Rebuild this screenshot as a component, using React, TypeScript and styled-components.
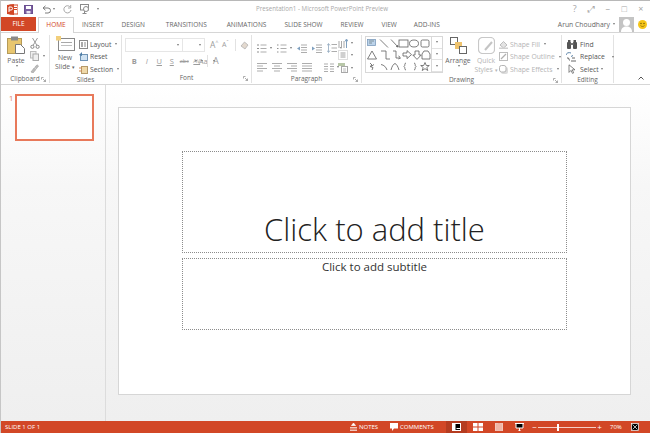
import styled, { createGlobalStyle } from "styled-components";
import type { ReactNode } from "react";

const GlobalStyle = createGlobalStyle`
  html, body { margin: 0; padding: 0; background: #fff; }
  * { box-sizing: border-box; }
`;

const orange = "#d24726";

// ---- small drawings ----

const Svg = ({ w, h, children }: { w: number; h: number; children: ReactNode }) => (
  <svg width={w} height={h} viewBox={`0 0 ${w} ${h}`} fill="none" style={{ display: "block", flex: "none" }}>
    {children}
  </svg>
);

const PptLogo = () => (
  <Svg w={11} h={11}>
    <rect x="3" y="1" width="8" height="9" fill="#fff" stroke="#d24726" />
    <rect x="6" y="3" width="4" height="1" fill="#d24726" />
    <rect x="6" y="5" width="4" height="1" fill="#d24726" />
    <path d="M0 1 7 0v11L0 10z" fill="#d24726" />
    <path d="M2 8V3h2a1.2 1.2 0 0 1 0 3H2" stroke="#fff" />
  </Svg>
);

const SaveIcon = () => (
  <Svg w={9} h={9}>
    <rect x="0.5" y="0.5" width="8" height="8" fill="#7a5fa0" stroke="#6a4f90" />
    <rect x="2" y="1" width="5" height="3" fill="#fff" />
    <rect x="2.5" y="6" width="4" height="2.5" fill="#e8e4f0" />
  </Svg>
);

const UndoIcon = () => (
  <Svg w={9} h={9}>
    <path d="M1 3h5a2.5 2.5 0 0 1 0 5H3M1 3l2.5-2.2M1 3l2.5 2.2" stroke="#7d7d7d" />
  </Svg>
);

const RedoIcon = () => (
  <Svg w={9} h={9}>
    <path d="M7.5 2.4A3.6 3.6 0 1 0 8 5M7.7 0v3H5" stroke="#a8a8a8" />
  </Svg>
);

const ShowIcon = () => (
  <Svg w={10} h={10}>
    <rect x="0.5" y="0.5" width="8" height="5.5" stroke="#8a8a8a" />
    <path d="M4.5 6v3M2.5 9.5h4" stroke="#8a8a8a" />
    <circle cx="6" cy="5" r="2.5" fill="#fff" stroke="#8a8a8a" />
  </Svg>
);

const PasteIcon = () => (
  <Svg w={19} h={18}>
    <rect x="0.5" y="2.5" width="14" height="15" fill="#e8c66f" stroke="#b59a58" />
    <rect x="4" y="0.5" width="7" height="4" fill="#8a8a8a" />
    <path d="M8.5 8.5h5l4 4v5h-9z" fill="#fff" stroke="#777" />
  </Svg>
);

const ScissorsIcon = () => (
  <Svg w={10} h={11}>
    <path d="M2.5 0 7 7.5M7.5 0 3 7.5" stroke="#9a9a9a" />
    <circle cx="2.4" cy="8.8" r="1.6" stroke="#888" />
    <circle cx="7.6" cy="8.8" r="1.6" stroke="#888" />
  </Svg>
);

const CopyIcon = () => (
  <Svg w={9} h={10}>
    <rect x="0.5" y="0.5" width="5.5" height="6.5" fill="#eee" stroke="#bbb" />
    <rect x="3" y="3" width="5.5" height="6.5" fill="#eee" stroke="#aaa" />
  </Svg>
);

const PainterIcon = () => (
  <Svg w={9} h={9}>
    <path d="M1 8 4 4l2 1.5L3 9zM4.5 3.5 7 .8l1.6 1.2L6.2 5" fill="#bbb" stroke="#a0a0a0" strokeWidth=".6" />
  </Svg>
);

const NewSlideIcon = () => (
  <Svg w={19} h={15}>
    <rect x="2.5" y="2.5" width="16" height="12" fill="#fff" stroke="#888" />
    <rect x="5" y="6" width="11" height="1" fill="#a8a8a8" />
    <rect x="5" y="9" width="11" height="1" fill="#c0c0c0" />
    <rect x="0" y="0" width="5" height="4.5" fill="#f2cf7c" />
  </Svg>
);

const LayoutIcon = () => (
  <Svg w={9} h={9}>
    <rect x="0.5" y="0.5" width="8" height="8" fill="#fff" stroke="#8a8a8a" />
    <rect x="2" y="2" width="2" height="5" fill="#a9a9a9" />
    <rect x="5" y="2" width="2" height="5" fill="#c5c5c5" />
  </Svg>
);

const ResetIcon = () => (
  <Svg w={9} h={9}>
    <rect x="1.5" y="2.5" width="7" height="6" fill="#cfe2f2" stroke="#6f93b4" />
    <path d="M0 3 3 0v4z" fill="#4d7ea8" />
  </Svg>
);

const SectionIcon = () => (
  <Svg w={9} h={9}>
    <rect x="2.5" y="1.5" width="6" height="7" fill="#f0d9a8" stroke="#b59a6a" />
    <path d="M0 3h3M0 6h3" stroke="#d08a50" />
  </Svg>
);

const ListIcon = ({ kind }: { kind: "bullets" | "numbers" | "outdent" | "indent" | "spacing" | "left" | "center" | "right" | "justify" | "columns" }) => {
  const c = "#adadad";
  if (kind === "bullets" || kind === "numbers")
    return (
      <Svg w={10} h={9}>
        <path d="M3.5 1h6M3.5 4.5h6M3.5 8h6" stroke={c} />
        <path d="M0 1h2M0 4.5h2M0 8h2" stroke="#8f8f8f" strokeDasharray={kind === "numbers" ? "1 .5" : undefined} />
      </Svg>
    );
  if (kind === "outdent" || kind === "indent")
    return (
      <Svg w={10} h={9}>
        <path d="M4 1h6M4 3.5h6M4 6h6M4 8.5h6" stroke={c} />
        <path d={kind === "indent" ? "M3 4.5 0 2.5v4z" : "M0 4.5 3 2.5v4z"} fill="#7fa0bf" />
      </Svg>
    );
  if (kind === "spacing")
    return (
      <Svg w={10} h={10}>
        <path d="M1.5 1v8M0 2.5l1.5-2 1.5 2M0 7.5l1.5 2 1.5-2" stroke="#8fa6bc" strokeWidth=".8" />
        <path d="M4.5 1.5H10M4.5 5H10M4.5 8.5H10" stroke={c} />
      </Svg>
    );
  if (kind === "columns")
    return (
      <Svg w={10} h={9}>
        <path d="M0 1h4M0 3.5h4M0 6h4M0 8.5h4M6 1h4M6 3.5h4M6 6h4M6 8.5h4" stroke={c} />
      </Svg>
    );
  const rows = { left: [10, 6, 10, 6], center: [10, 6, 10, 6], right: [10, 6, 10, 6], justify: [10, 10, 10, 10] }[kind];
  return (
    <Svg w={10} h={9}>
      {rows.map((n, i) => {
        const x = kind === "center" ? (10 - n) / 2 : kind === "right" ? 10 - n : 0;
        return <rect key={i} x={x} y={i * 2.5} width={n} height="1" fill={c} />;
      })}
    </Svg>
  );
};

const TextDirIcon = () => (
  <Svg w={10} h={11}>
    <path d="M1 3v7M3.5 3v7M6 3v7" stroke="#a9a9a9" />
    <path d="M8.5 10V2M7 3.5 8.5 1 10 3.5" stroke="#7fa0bf" />
  </Svg>
);

const AlignTextIcon = () => (
  <Svg w={10} h={10}>
    <rect x="0.5" y="0.5" width="9" height="9" stroke="#bcbcbc" strokeDasharray="1 1" />
    <path d="M2.5 3h5M2.5 5h5M2.5 7h5" stroke="#a0a0a0" />
  </Svg>
);

const SmartArtIcon = () => (
  <Svg w={10} h={11}>
    <path d="M0 1h7v3H0z" fill="#b8c7a8" />
    <rect x="3.5" y="4.5" width="6" height="6" fill="#fff" stroke="#a8a8a8" />
    <path d="M5 7h3M5 9h3" stroke="#bdbdbd" />
  </Svg>
);

const ShapesGallery = () => (
  <svg width="65" height="33" viewBox="0 0 65 33" fill="none" stroke="#5d5d5d" strokeWidth=".8" style={{ display: "block" }}>
    <rect x="1.5" y="1.5" width="8" height="6" fill="#bcd3ea" stroke="#7d9cbc" />
    <path d="M3 3h5M3 5h3" stroke="#566" strokeWidth=".6" />
    <path d="M14 1.5 22 9.5M25 1.5l7 7.5M32 9l-2-.6M32 9l-.6-2" />
    <rect x="33" y="2" width="9" height="7" />
    <ellipse cx="48" cy="5.5" rx="4.5" ry="3.5" />
    <rect x="55" y="2" width="8" height="7" rx="1.5" />
    <path d="M1.5 21 6 13l4.5 8zM15 13h5v8h4M27 13h3v7h5M34 19l-1.6-1M34 20l-1.6 1" />
    <path d="M37 15h4v-2.4l4.5 4-4.5 4V18h-4zM49 13h4v4h2.2L51 21.4 46.8 17H49zM58 13h4l2 3v5h-8v-5z" />
    <path d="M4 25l2 2-2 1.5 3 1-1 2.5M8 26.5l-3 2M15 26.5c3 .5 5 2.500 6 5.500M25 32c1-4 2.500-6 4-6.500 1.500.5 3 3 4 6.500" />
    <path d="M40 25c-2 0-.5 3-2 3.500 1.500.5 0 3.500 2 3.500M48 25c2 0 .5 3 2 3.500-1.500.5 0 3.500-2 3.500" />
    <path d="M59 24.500l1.300 3h3l-2.500 2 1 3-2.800-1.800-2.800 1.800 1-3-2.500-2h3z" />
  </svg>
);

const ArrangeIcon = () => (
  <Svg w={17} h={17}>
    <rect x="0.5" y="0.5" width="7" height="7" fill="#fff" stroke="#666" />
    <rect x="5" y="5" width="7" height="7" fill="#efc36d" />
    <rect x="9.500" y="9.500" width="7" height="7" fill="#fff" stroke="#666" />
  </Svg>
);

const QuickStylesIcon = () => (
  <Svg w={17} h={17}>
    <rect x="0.5" y="0.5" width="16" height="16" rx="4" fill="#fff" stroke="#c8c8c8" strokeWidth="1.200" />
    <path d="M7 13 14 5" stroke="#c4c4c4" strokeWidth="2" />
  </Svg>
);

const ShapeFillIcon = () => (
  <Svg w={9} h={9}>
    <path d="M1 5 4.500 1.500 8 5 4.500 8z" fill="#e4e4e4" stroke="#bdbdbd" />
    <rect x="0" y="7.500" width="9" height="1.500" fill="#d0d0d0" />
  </Svg>
);

const ShapeOutlineIcon = () => (
  <Svg w={9} h={9}>
    <rect x="0.5" y="0.5" width="8" height="8" stroke="#bdbdbd" />
    <path d="M2 7 7 2" stroke="#b0b0b0" strokeWidth="1.200" />
  </Svg>
);

const ShapeEffectsIcon = () => (
  <Svg w={9} h={9}>
    <rect x="2" y="2" width="7" height="7" rx="2" fill="#dcdcdc" />
    <rect x="0.5" y="0.5" width="6.500" height="6.500" rx="2" fill="#fff" stroke="#b5b5b5" />
  </Svg>
);

const FindIcon = () => (
  <Svg w={10} h={9}>
    <rect x="0" y="2" width="4" height="7" rx="1" fill="#555" />
    <rect x="6" y="2" width="4" height="7" rx="1" fill="#555" />
    <rect x="1" y="0" width="2.500" height="3" fill="#555" />
    <rect x="6.500" y="0" width="2.500" height="3" fill="#555" />
    <rect x="3.500" y="3" width="3" height="2" fill="#777" />
  </Svg>
);

const ReplaceIcon = () => (
  <Svg w={11} h={10}>
    <path d="M0 3c.5-2 2.500-3 5-2" stroke="#5b83a8" />
    <path d="M1 6h1.500l1 2.500M5 9h5M6 6h3" stroke="#666" />
    <path d="M5 4.500 7 3.500" stroke="#5b83a8" />
  </Svg>
);

const SelectIcon = () => (
  <Svg w={8} h={10}>
    <path d="M1 .8v7.600l2-2 1.500 3 1.200-.6-1.500-3H7z" fill="#fff" stroke="#666" strokeWidth=".8" />
  </Svg>
);

const Launcher = () => (
  <Svg w={5} h={5}>
    <path d="M.5 2.500V.5h2M4.500 4.500 2 2M4.500 2.500v2h-2" stroke="#8a8a8a" strokeWidth=".7" />
  </Svg>
);

// ---- ribbon content ----

const paragraphRow1 = ["bullets", "numbers", "outdent", "indent", "spacing"] as const;
const paragraphRow2 = ["left", "center", "right", "justify"] as const;

const shapeTools = [
  { name: "Shape Fill", icon: <ShapeFillIcon /> },
  { name: "Shape Outline", icon: <ShapeOutlineIcon /> },
  { name: "Shape Effects", icon: <ShapeEffectsIcon /> },
];

const editingTools = [
  { name: "Find", icon: <FindIcon />, caret: false },
  { name: "Replace", icon: <ReplaceIcon />, caret: true },
  { name: "Select", icon: <SelectIcon />, caret: true },
];

const slideTools = [
  { name: "Layout", icon: <LayoutIcon />, caret: true },
  { name: "Reset", icon: <ResetIcon />, caret: false },
  { name: "Section", icon: <SectionIcon />, caret: true },
];

const tabs = [
  { name: "INSERT", gap: 8 },
  { name: "DESIGN", gap: 18 },
  { name: "TRANSITIONS", gap: 21 },
  { name: "ANIMATIONS", gap: 20 },
  { name: "SLIDE SHOW", gap: 18 },
  { name: "REVIEW", gap: 18 },
  { name: "VIEW", gap: 18 },
  { name: "ADD-INS", gap: 17 },
];

export default function App() {
  return (
    <>
      <GlobalStyle />
      <Window>
        <TitleBar>
          <QuickAccess>
            <PptLogo />
            <QatSlot $left={6}><SaveIcon /></QatSlot>
            <QatSlot $left={9}><UndoIcon /></QatSlot>
            <Caret $left={2} />
            <QatSlot $left={8}><RedoIcon /></QatSlot>
            <QatSlot $left={8}><ShowIcon /></QatSlot>
            <Caret $left={7} />
          </QuickAccess>
          <WindowTitle>Presentation1 - Microsoft PowerPoint Preview</WindowTitle>
          <WindowButtons>
            <WindowButton>?</WindowButton>
            <WindowButton>⤢</WindowButton>
            <WindowButton>–</WindowButton>
            <WindowButton>□</WindowButton>
            <WindowButton>×</WindowButton>
          </WindowButtons>
        </TitleBar>

        <TabBar>
          <FileTab>FILE</FileTab>
          <HomeTab>HOME</HomeTab>
          {tabs.map((t) => (
            <Tab key={t.name} $gap={t.gap}>{t.name}</Tab>
          ))}
          <Account>
            <span>Arun Choudhary</span>
            <Caret $left={3} />
            <Avatar>
              <svg width="15" height="15" viewBox="0 0 15 15" style={{ display: "block" }}>
                <rect width="15" height="15" fill="#c4c4c4" />
                <circle cx="7.500" cy="5.500" r="3.500" fill="#fff" />
                <path d="M2 15c0-4 2.500-5.500 5.500-5.500S13 11 13 15z" fill="#fff" />
              </svg>
            </Avatar>
            <Smile>
              <svg width="9" height="9" viewBox="0 0 9 9" style={{ display: "block" }}>
                <circle cx="4.500" cy="4.500" r="4.500" fill="#f5c518" />
                <circle cx="3" cy="3.500" r=".7" fill="#6b5200" />
                <circle cx="6" cy="3.500" r=".7" fill="#6b5200" />
                <path d="M2.500 5.500c.8 1.300 3.200 1.300 4 0" stroke="#6b5200" strokeWidth=".6" fill="none" />
              </svg>
            </Smile>
          </Account>
        </TabBar>

        <Ribbon>
          <Group $width={49}>
            <GroupBody>
              <BigButton $width={22}>
                <PasteIcon />
                <BigLabel>Paste</BigLabel>
                <Caret />
              </BigButton>
              <IconStack>
                <ScissorsIcon />
                <Row><CopyIcon /><Caret $left={4} /></Row>
                <PainterIcon />
              </IconStack>
            </GroupBody>
            <GroupFooter>
              <GroupName>Clipboard</GroupName>
              <LauncherSlot><Launcher /></LauncherSlot>
            </GroupFooter>
          </Group>

          <Group $width={72}>
            <GroupBody>
              <BigButton $width={22}>
                <NewSlideIcon />
                <BigLabel>New<br />Slide <InlineCaret>▾</InlineCaret></BigLabel>
              </BigButton>
              <ToolStack>
                {slideTools.map((t) => (
                  <ToolRow key={t.name}>
                    {t.icon}
                    <span>{t.name}</span>
                    {t.caret && <Caret />}
                  </ToolRow>
                ))}
              </ToolStack>
            </GroupBody>
            <GroupFooter><GroupName>Slides</GroupName></GroupFooter>
          </Group>

          <Group $width={130}>
            <FontRows>
              <Row>
                <Combo $width={58}><Caret /></Combo>
                <Combo $width={23}><Caret /></Combo>
                <GrowFont $left={6}>A<sup>^</sup></GrowFont>
                <GrowFont $left={3} $small>A<sup>ˇ</sup></GrowFont>
                <FontDivider />
                <svg width="9" height="9" viewBox="0 0 9 9" style={{ display: "block", marginLeft: 2 }}>
                  <path d="M1 5 4.500 1 8 4 5 8z" fill="#e3d9cf" stroke="#aaa" strokeWidth=".7" />
                </svg>
              </Row>
              <FormatRow>
                <FormatGlyph $weight={700}>B</FormatGlyph>
                <FormatGlyph $italic>I</FormatGlyph>
                <FormatGlyph $underline>U</FormatGlyph>
                <FormatGlyph $underline>S</FormatGlyph>
                <FormatGlyph $strike $small>abc</FormatGlyph>
                <FormatGlyph $underline $small>AV</FormatGlyph>
                <Caret $left={-8} />
                <FormatGlyph>Aa</FormatGlyph>
                <Caret $left={-9} />
                <FontDivider />
                <FormatGlyph $large>A</FormatGlyph>
                <Caret $left={-9} />
              </FormatRow>
            </FontRows>
            <GroupFooter>
              <GroupName>Font</GroupName>
              <LauncherSlot><Launcher /></LauncherSlot>
            </GroupFooter>
          </Group>

          <Group $width={110}>
            <ParagraphBody>
              <ParagraphRows>
                <ParaRow>
                  {paragraphRow1.map((k, i) => (
                    <Row key={k}>
                      <ListIcon kind={k} />
                      {(i < 2 || i === 4) && <Caret $left={3} />}
                    </Row>
                  ))}
                </ParaRow>
                <ParaRow>
                  {paragraphRow2.map((k) => (
                    <ListIcon key={k} kind={k} />
                  ))}
                  <ParaDivider />
                  <Row><ListIcon kind="columns" /><Caret $left={3} /></Row>
                </ParaRow>
              </ParagraphRows>
              <IconStack>
                <Row><TextDirIcon /><Caret $left={3} /></Row>
                <Row><AlignTextIcon /><Caret $left={3} /></Row>
                <Row><SmartArtIcon /><Caret $left={3} /></Row>
              </IconStack>
            </ParagraphBody>
            <GroupFooter>
              <GroupName>Paragraph</GroupName>
              <LauncherSlot><Launcher /></LauncherSlot>
            </GroupFooter>
          </Group>

          <Group $width={200}>
            <DrawingBody>
              <Gallery>
                <ShapesGallery />
                <GalleryScroll>
                  <GalleryStep><Caret /></GalleryStep>
                  <GalleryStep><Caret /></GalleryStep>
                  <GalleryStep><Caret /></GalleryStep>
                </GalleryScroll>
              </Gallery>
              <DrawButton $width={28}>
                <ArrangeIcon />
                <BigLabel>Arrange</BigLabel>
                <Caret />
              </DrawButton>
              <DrawButton $width={26} $muted>
                <QuickStylesIcon />
                <BigLabel>Quick<br />Styles <InlineCaret>▾</InlineCaret></BigLabel>
              </DrawButton>
              <ToolStack $muted>
                {shapeTools.map((t) => (
                  <ToolRow key={t.name}>
                    {t.icon}
                    <span>{t.name}</span>
                    <Caret />
                  </ToolRow>
                ))}
              </ToolStack>
            </DrawingBody>
            <GroupFooter>
              <GroupName>Drawing</GroupName>
              <LauncherSlot><Launcher /></LauncherSlot>
            </GroupFooter>
          </Group>

          <Group $width={52} $last>
            <EditingBody>
              <ToolStack>
                {editingTools.map((t) => (
                  <ToolRow key={t.name}>
                    <EditIcon>{t.icon}</EditIcon>
                    <span>{t.name}</span>
                    {t.caret && <Caret $left={t.name === "Replace" ? 5 : 0} />}
                  </ToolRow>
                ))}
              </ToolStack>
            </EditingBody>
            <GroupFooter><GroupName>Editing</GroupName></GroupFooter>
          </Group>

          <Collapse>
            <svg width="6" height="4" viewBox="0 0 6 4" style={{ display: "block" }}>
              <path d="M.5 3.500 3 1l2.500 2.500" stroke="#555" fill="none" />
            </svg>
          </Collapse>
        </Ribbon>

        <Workspace>
          <ThumbPane>
            <ThumbNumber>1</ThumbNumber>
            <Thumb />
          </ThumbPane>
          <Editor>
            <Slide>
              <TitleHolder>Click to add title</TitleHolder>
              <SubtitleHolder>Click to add subtitle</SubtitleHolder>
            </Slide>
          </Editor>
        </Workspace>

        <StatusBar>
          <SlideCount>SLIDE 1 OF 1</SlideCount>
          <StatusItem $width={40}>
            <svg width="7" height="8" viewBox="0 0 7 8" style={{ display: "block" }}>
              <path d="M0 4.500h7M0 6h7M0 7.500h7M3.500 0 1.500 2.500h4z" stroke="#fff" strokeWidth=".7" fill="#fff" />
            </svg>
            NOTES
          </StatusItem>
          <StatusItem $width={56}>
            <svg width="8" height="8" viewBox="0 0 8 8" style={{ display: "block" }}>
              <path d="M0 0h8v5.500H4L2 8V5.500H0z" fill="#fff" />
            </svg>
            COMMENTS
          </StatusItem>
          <ViewButton $active>
            <svg width="9" height="8" viewBox="0 0 9 8" style={{ display: "block" }}>
              <rect x=".5" y=".5" width="8" height="7" stroke="#fff" />
              <rect x="1" y="1" width="2.500" height="6" fill="#fff" />
              <rect x="4.500" y="5" width="3.500" height="1" fill="#fff" />
            </svg>
          </ViewButton>
          <ViewButton>
            <svg width="10" height="8" viewBox="0 0 10 8" style={{ display: "block" }}>
              <path d="M0 0h4.500v3.500H0zM5.500 0H10v3.500H5.500zM0 4.500h4.500V8H0zM5.500 4.500H10V8H5.500z" fill="#fff" />
            </svg>
          </ViewButton>
          <ViewButton>
            <svg width="8" height="8" viewBox="0 0 8 8" style={{ display: "block" }}>
              <path d="M0 .5h3.500l.5.500.5-.5H8v7H4.500L4 8l-.5-.5H0z" fill="#f0b5a5" stroke="#fff" strokeWidth=".5" />
            </svg>
          </ViewButton>
          <ViewButton>
            <svg width="9" height="8" viewBox="0 0 9 8" style={{ display: "block" }}>
              <path d="M0 .5h9M1 .5V5h7V.5M4.500 5v3M3 8h3" stroke="#fff" />
            </svg>
          </ViewButton>
          <Zoom>
            <ZoomSign>−</ZoomSign>
            <ZoomTrack><ZoomThumb /></ZoomTrack>
            <ZoomSign>+</ZoomSign>
          </Zoom>
          <ZoomValue>70%</ZoomValue>
          <FitButton>
            <svg width="8" height="8" viewBox="0 0 8 8" style={{ display: "block" }}>
              <rect x=".5" y=".5" width="7" height="7" stroke="#fff" strokeWidth=".7" />
              <path d="M1.500 1.500l5 5M6.500 1.500l-5 5" stroke="#fff" strokeWidth=".7" />
            </svg>
          </FitButton>
        </StatusBar>
      </Window>
    </>
  );
}

// ---- styles ----

const Window = styled.div`
  width: 650px;
  height: 433px;
  display: flex;
  flex-direction: column;
  overflow: hidden;
  background: #fff;
  border-left: 1px solid #c6c6c6;
  border-top: 1px solid #b8b8b8;
  font-family: "Open Sans", "Liberation Sans", sans-serif;
  color: #555;
`;

const TitleBar = styled.div`
  height: 16px;
  flex: none;
  display: flex;
  align-items: center;
  position: relative;
  padding-left: 6px;
`;

const QuickAccess = styled.div`
  display: flex;
  align-items: center;
`;

const QatSlot = styled.div<{ $left: number }>`
  margin-left: ${(p) => p.$left}px;
`;

const Caret = styled.span<{ $left?: number }>`
  display: inline-block;
  flex: none;
  width: 0;
  height: 0;
  margin-left: ${(p) => p.$left ?? 2}px;
  border-left: 1.500px solid transparent;
  border-right: 1.500px solid transparent;
  border-top: 2px solid #777;
`;

const WindowTitle = styled.div`
  position: absolute;
  left: 255px;
  top: 3px;
  font-size: 6.200px;
  line-height: 10px;
  color: #a9a9a9;
  white-space: nowrap;
`;

const WindowButtons = styled.div`
  margin-left: auto;
  display: flex;
  padding-right: 1px;
`;

const WindowButton = styled.div`
  width: 16.500px;
  text-align: center;
  font-size: 9px;
  line-height: 12px;
  color: #a6a6a6;
`;

const TabBar = styled.div`
  height: 15px;
  flex: none;
  display: flex;
  align-items: center;
  position: relative;
  z-index: 1;
`;

const FileTab = styled.div`
  width: 35px;
  height: 14px;
  align-self: flex-start;
  background: ${orange};
  color: #fff;
  font-size: 6.500px;
  line-height: 14px;
  text-align: center;
`;

const HomeTab = styled.div`
  width: 36px;
  height: 16px;
  align-self: flex-start;
  margin-left: 2px;
  background: #fff;
  border: 1px solid #d4d4d4;
  border-bottom: none;
  color: ${orange};
  font-size: 6.500px;
  line-height: 13px;
  text-align: center;
`;

const Tab = styled.div<{ $gap: number }>`
  margin-left: ${(p) => p.$gap}px;
  font-size: 6.500px;
  line-height: 14px;
  color: #666;
  white-space: nowrap;
`;

const Account = styled.div`
  margin-left: auto;
  display: flex;
  align-items: center;
  font-size: 6.800px;
  color: #666;
  align-self: flex-start;
  height: 14px;
  white-space: nowrap;
`;

const Avatar = styled.div`
  margin-left: 4px;
`;

const Smile = styled.div`
  margin-left: 4px;
  margin-right: 3px;
`;

const Ribbon = styled.div`
  height: 53px;
  flex: none;
  display: flex;
  border-bottom: 1px solid #d6d6d6;
  border-top: 1px solid #d6d6d6;
  position: relative;
`;

const Group = styled.div<{ $width: number; $last?: boolean }>`
  width: ${(p) => p.$width}px;
  flex: none;
  display: flex;
  flex-direction: column;
  margin-top: 2px;
  margin-bottom: 1px;
  border-right: 1px solid #e2e2e2;
`;

const GroupBody = styled.div`
  flex: 1;
  display: flex;
  padding: 1px 0 0 4px;
  gap: 3px;
`;

const GroupFooter = styled.div`
  height: 10px;
  flex: none;
  position: relative;
  text-align: center;
`;

const GroupName = styled.div`
  font-size: 6.500px;
  line-height: 10px;
  color: #666;
`;

const LauncherSlot = styled.div`
  position: absolute;
  right: 3px;
  top: 3px;
`;

const BigButton = styled.div<{ $width: number }>`
  width: ${(p) => p.$width}px;
  flex: none;
  display: flex;
  flex-direction: column;
  align-items: center;
`;

const BigLabel = styled.div`
  font-size: 6.800px;
  line-height: 9px;
  margin-top: 2px;
  text-align: center;
  white-space: nowrap;
  color: #666;
`;

const InlineCaret = styled.span`
  font-size: 5px;
`;

const IconStack = styled.div`
  display: flex;
  flex-direction: column;
  justify-content: space-around;
  padding-top: 1px;
  height: 38px;
`;

const Row = styled.div`
  display: flex;
  align-items: center;
`;

const ToolStack = styled.div<{ $muted?: boolean }>`
  display: flex;
  flex-direction: column;
  height: 39px;
  padding-top: 2px;
  justify-content: space-between;
  color: ${(p) => (p.$muted ? "#b4b4b4" : "#555")};
`;

const ToolRow = styled.div`
  display: flex;
  align-items: center;
  gap: 2px;
  height: 12px;
  font-size: 6.800px;
  white-space: nowrap;
`;

const FontRows = styled.div`
  flex: 1;
  display: flex;
  flex-direction: column;
  padding: 3px 0 0 3px;
`;

const Combo = styled.div<{ $width: number }>`
  width: ${(p) => p.$width}px;
  height: 14px;
  flex: none;
  margin-right: -1px;
  border: 1px solid #e6e6e6;
  display: flex;
  align-items: center;
  justify-content: flex-end;
  padding-right: 3px;
`;

const GrowFont = styled.div<{ $left: number; $small?: boolean }>`
  margin-left: ${(p) => p.$left}px;
  font-size: ${(p) => (p.$small ? 7 : 8.500)}px;
  line-height: 12px;
  color: #9c9c9c;
  width: 9px;

  sup {
    font-size: 5px;
    line-height: 0;
  }
`;

const FontDivider = styled.div`
  width: 1px;
  height: 12px;
  margin: 0 2px 0 4px;
  background: #e2e2e2;
`;

const FormatRow = styled.div`
  display: flex;
  align-items: center;
  margin-top: 3px;
  padding-left: 3px;
`;

const FormatGlyph = styled.div<{ $weight?: number; $italic?: boolean; $underline?: boolean; $strike?: boolean; $small?: boolean; $large?: boolean }>`
  min-width: 12.500px;
  text-align: center;
  font-size: ${(p) => (p.$small ? 5.500 : p.$large ? 9 : 7.500)}px;
  line-height: 12px;
  color: #9c9c9c;
  font-weight: ${(p) => p.$weight ?? 400};
  font-style: ${(p) => (p.$italic ? "italic" : "normal")};
  text-decoration: ${(p) => (p.$underline ? "underline" : p.$strike ? "line-through" : "none")};
`;

const ParagraphBody = styled.div`
  flex: 1;
  display: flex;
  padding: 1px 0 0 5px;
`;

const ParagraphRows = styled.div`
  width: 81px;
  display: flex;
  flex-direction: column;
  padding-top: 7px;
  gap: 9px;
`;

const ParaRow = styled.div`
  display: flex;
  align-items: center;
  gap: 5px;
  height: 10px;
`;

const ParaDivider = styled.div`
  width: 1px;
  height: 12px;
  background: #e4e4e4;
  margin: 0 1px;
`;

const DrawingBody = styled.div`
  flex: 1;
  display: flex;
  padding: 1px 0 0 3px;
`;

const Gallery = styled.div`
  display: flex;
  height: 37px;
  flex: none;
  border: 1px solid #d8d8d8;
  width: 78px;
  padding-top: 1px;
`;

const GalleryScroll = styled.div`
  margin-left: auto;
  width: 11px;
  display: flex;
  flex-direction: column;
  border-left: 1px solid #d8d8d8;
  margin-top: -1px;
`;

const GalleryStep = styled.div`
  flex: 1;
  display: flex;
  align-items: center;
  justify-content: center;
  border-bottom: 1px solid #e2e2e2;

  ${Caret} {
    margin-left: 0;
  }
`;

const DrawButton = styled.div<{ $width: number; $muted?: boolean }>`
  width: ${(p) => p.$width}px;
  flex: none;
  display: flex;
  flex-direction: column;
  align-items: center;
  padding-top: 1px;
  margin-left: 1px;

  ${BigLabel} {
    color: ${(p) => (p.$muted ? "#b4b4b4" : "#666")};
  }
`;

const EditingBody = styled.div`
  flex: 1;
  padding: 1px 0 0 4px;
`;

const EditIcon = styled.div`
  width: 11px;
  margin-right: 1px;
  display: flex;
  justify-content: center;
`;

const Collapse = styled.div`
  position: absolute;
  right: 6px;
  bottom: 4px;
`;

const Workspace = styled.div`
  flex: 1;
  min-height: 0;
  display: flex;
  background: linear-gradient(#ffffff 0, #f7f7f7 30%, #efefef 100%);
`;

const ThumbPane = styled.div`
  width: 105px;
  flex: none;
  display: flex;
  align-items: flex-start;
  padding: 9px 0 0 8px;
  gap: 3px;
  border-right: 1px solid #dcdcdc;
`;

const ThumbNumber = styled.div`
  font-size: 7.500px;
  line-height: 9px;
  color: #e07a5f;
  width: 3px;
`;

const Thumb = styled.div`
  width: 79px;
  height: 47px;
  background: #fff;
  border: 2px solid #e8795a;
`;

const Editor = styled.div`
  flex: 1;
  padding: 22px 19px 26px 12px;
  display: flex;
`;

const Slide = styled.div`
  flex: 1;
  background: #fff;
  border: 1px solid #d6d6d6;
  padding: 43px 63px 0;
  display: flex;
  flex-direction: column;
  gap: 5px;
`;

const TitleHolder = styled.div`
  height: 102px;
  border: 1px dotted #8c8c8c;
  display: flex;
  align-items: flex-end;
  justify-content: center;
  padding-bottom: 3px;
  font-size: 31px;
  font-weight: 300;
  line-height: 40px;
  color: #222;
`;

const SubtitleHolder = styled.div`
  height: 72px;
  border: 1px dotted #8c8c8c;
  text-align: center;
  font-size: 11.500px;
  line-height: 16px;
  color: #333;
`;

const StatusBar = styled.div`
  height: 12px;
  flex: none;
  margin-left: -1px;
  background: ${orange};
  display: flex;
  align-items: center;
  color: #fff;
  font-size: 6px;
  white-space: nowrap;
`;

const SlideCount = styled.div`
  margin-left: 5px;
  width: 345px;
`;

const StatusItem = styled.div<{ $width: number }>`
  width: ${(p) => p.$width}px;
  display: flex;
  align-items: center;
  gap: 2px;
`;

const ViewButton = styled.div<{ $active?: boolean }>`
  width: 21px;
  height: 12px;
  display: flex;
  align-items: center;
  justify-content: center;
  background: ${(p) => (p.$active ? "#b53c20" : "transparent")};
`;

const Zoom = styled.div`
  display: flex;
  align-items: center;
  margin-left: 1px;
`;

const ZoomSign = styled.div`
  width: 7px;
  text-align: center;
  font-size: 8px;
  line-height: 12px;
`;

const ZoomTrack = styled.div`
  width: 58px;
  height: 1px;
  background: #f6cfc5;
  position: relative;
`;

const ZoomThumb = styled.div`
  position: absolute;
  left: 19px;
  top: -3px;
  width: 2px;
  height: 7px;
  background: #fff;
`;

const ZoomValue = styled.div`
  margin-left: 7px;
  width: 19px;
  font-size: 6px;
`;

const FitButton = styled.div`
  margin-left: 2px;
`;
